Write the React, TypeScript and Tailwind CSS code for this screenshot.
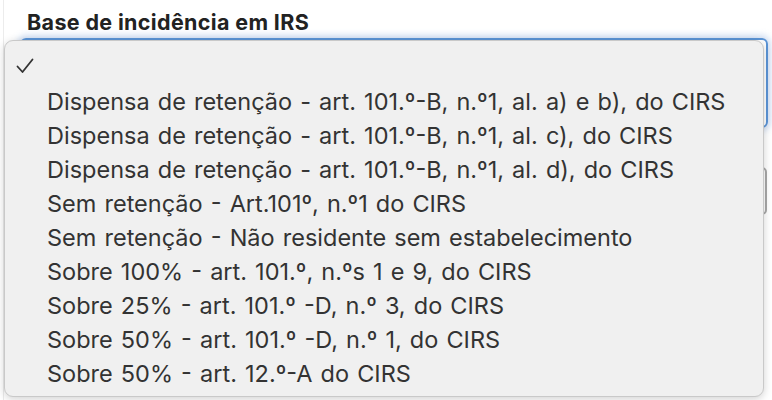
import React from "react";

const items = [
  "Dispensa de retenção - art. 101.º-B, n.º1, al. a) e b), do CIRS",
  "Dispensa de retenção - art. 101.º-B, n.º1, al. c), do CIRS",
  "Dispensa de retenção - art. 101.º-B, n.º1, al. d), do CIRS",
  "Sem retenção - Art.101º, n.º1 do CIRS",
  "Sem retenção - Não residente sem estabelecimento",
  "Sobre 100% - art. 101.º, n.ºs 1 e 9, do CIRS",
  "Sobre 25% - art. 101.º -D, n.º 3, do CIRS",
  "Sobre 50% - art. 101.º -D, n.º 1, do CIRS",
  "Sobre 50% - art. 12.º-A do CIRS",
];

export default function App() {
  return (
    <div
      className="relative w-[772px] h-[400px] bg-white overflow-hidden"
      style={{ fontFamily: 'Inter, "Liberation Sans", Arial, sans-serif' }}
    >
      <div className="absolute left-[3px] top-0 h-full w-px bg-[#ececec]" />
      <div className="pl-[27px] pt-[9px] text-[21.5px] [letter-spacing:0.35px] font-bold leading-[26px] text-[#222]">
        Base de incidência em IRS
      </div>
      {/* underlying select (focused) */}
      <div className="absolute left-[20px] top-[38px] w-[748px] h-[90px] rounded-[6px] border-2 border-[#5b94d6] shadow-[0_0_6px_3px_rgba(120,160,220,0.35)]" />
      <div className="absolute left-[20px] top-[167px] w-[747px] h-[48px] rounded-[5px] border-2 border-[#a8a8a8]" />
      {/* popup menu */}
      <div className="absolute left-[4px] top-[40px] w-[760px] h-[357px] rounded-[9px] border border-[#c9c9c9] bg-[#f0f0f0] shadow-[0_2px_8px_rgba(0,0,0,0.18)] pt-[6px]">
        <div className="h-[38px] flex items-center pl-[11px]">
          <svg width="18" height="16" viewBox="0 0 18 16" fill="none">
            <path d="M1.5 8.5 L6.5 14 L16.5 1.5" stroke="#333" strokeWidth="1.8" strokeLinecap="round" strokeLinejoin="round" />
          </svg>
        </div>
        {items.map((t) => (
          <div key={t} className="h-[34px] leading-[34px] pl-[42px] text-[23.5px] [word-spacing:1.5px] text-[#333] whitespace-nowrap">
            {t}
          </div>
        ))}
      </div>
    </div>
  );
}
